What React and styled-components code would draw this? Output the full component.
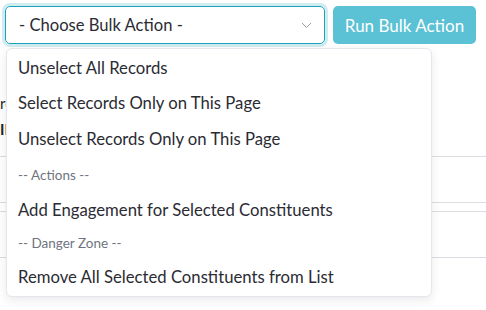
import React from "react";
import styled, { createGlobalStyle } from "styled-components";

const Global = createGlobalStyle`
  html, body { margin: 0; padding: 0; background: #fff; }
  body { font-family: Lato, "Open Sans", sans-serif; color: #212529; overflow: hidden; }
`;

const Page = styled.div`
  width: 486px;
  height: 310px;
  position: relative;
  overflow: hidden;
`;

const Toolbar = styled.div`
  display: flex;
  gap: 8px;
  padding: 6px 0 0 5px;
  height: 38px;
`;

const SelectBox = styled.div`
  box-sizing: border-box;
  width: 320px;
  height: 38px;
  border: 1px solid #1ba3bd;
  border-radius: 5px;
  box-shadow: 0 0 0 3px rgba(23, 162, 184, 0.2);
  display: flex;
  align-items: center;
  justify-content: space-between;
  padding: 0 12px 0 13px;
  font-size: 16.6px;
  color: #2b2b33;
`;

const Chevron = styled.svg`
  width: 11px;
  height: 7px;
  flex: none;
`;

const RunButton = styled.button`
  box-sizing: border-box;
  width: 143px;
  height: 38px;
  border: none;
  border-radius: 5px;
  background: #5bc1d4;
  color: #fff;
  font-family: inherit;
  font-size: 17px;
  padding: 0;
`;

const Content = styled.div`
  padding-top: 49px;
`;

const Label = styled.div`
  font-size: 15px;
  line-height: 20px;
  white-space: nowrap;
  margin-bottom: ${(p) => p.$mb}px;
  font-weight: ${(p) => (p.$bold ? 700 : 400)};
`;

const Row = styled.div`
  height: ${(p) => p.$h}px;
  border-top: 1px solid #dcdde3;
  box-sizing: border-box;
`;

const Menu = styled.div`
  position: absolute;
  left: 6px;
  top: 48px;
  width: 426px;
  height: 249px;
  box-sizing: border-box;
  background: #fff;
  border: 1px solid #e6e6ec;
  border-radius: 6px;
  box-shadow: 0 3px 10px rgba(40, 40, 60, 0.1);
  padding: 1px 0 0;
`;

const Item = styled.div`
  height: ${(p) => p.$h}px;
  display: flex;
  align-items: center;
  padding-left: 11px;
  white-space: nowrap;
  font-size: ${(p) => (p.$header ? 13.5 : 16.7)}px;
  color: ${(p) => (p.$header ? "#6f7480" : "#2b2b33")};
`;

const items = [
  { t: "Unselect All Records", hh: 35 },
  { t: "Select Records Only on This Page", hh: 36 },
  { t: "Unselect Records Only on This Page", hh: 36 },
  { t: "-- Actions --", h: true, hh: 36 },
  { t: "Add Engagement for Selected Constituents", hh: 33 },
  { t: "-- Danger Zone --", h: true, hh: 34 },
  { t: "Remove All Selected Constituents from List", hh: 33 },
];

export default function App() {
  return (
    <Page>
      <Global />
      <Toolbar>
        <SelectBox>
          <span>- Choose Bulk Action -</span>
          <Chevron viewBox="0 0 11 7">
            <path d="M1 1l4.5 4.5L10 1" fill="none" stroke="#9a9ca6" strokeWidth="1" />
          </Chevron>
        </SelectBox>
        <RunButton>Run Bulk Action</RunButton>
      </Toolbar>
      <Content>
        <Label $mb={6}>records selected</Label>
        <Label $mb={17} $bold>ID</Label>
        <Row $h={46} />
        <Row $h={9} />
        <Row $h={46} />
        <Row $h={9} />
      </Content>
      <Menu>
        {items.map((it) => (
          <Item key={it.t} $header={it.h} $h={it.hh}>
            {it.t}
          </Item>
        ))}
      </Menu>
    </Page>
  );
}
